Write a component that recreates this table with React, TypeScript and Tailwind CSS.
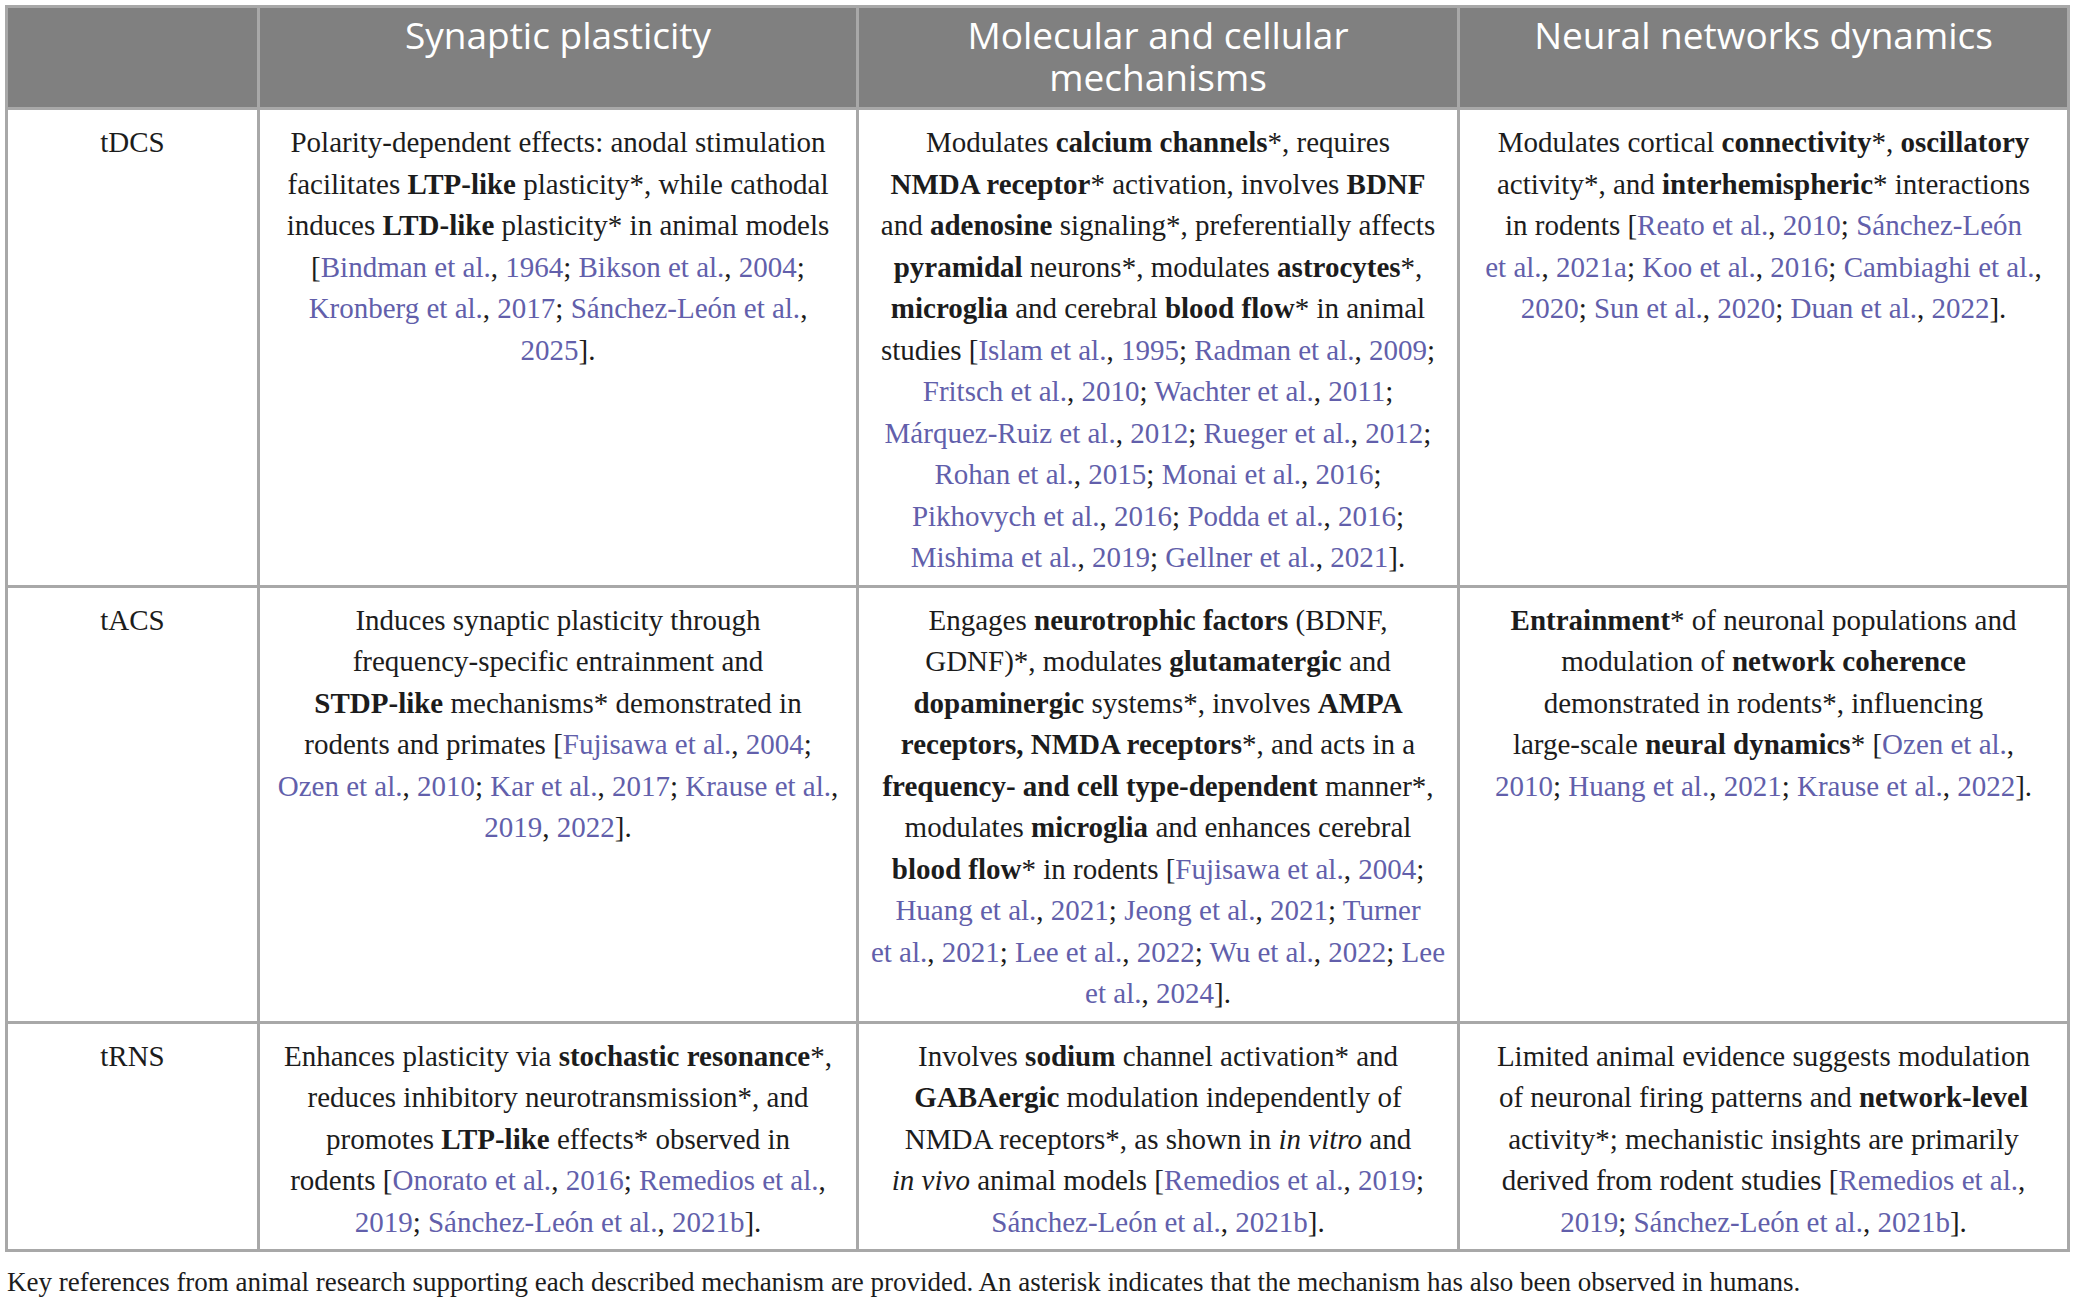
import type { ReactNode } from 'react';

// bold term, citation link, italic
const B = ({ children }: { children: ReactNode }) => (
  <b className="font-bold">{children}</b>
);
const L = ({ children }: { children: ReactNode }) => (
  <span className="text-[#625fab]">{children}</span>
);
const I = ({ children }: { children: ReactNode }) => (
  <i className="italic">{children}</i>
);

// "Author et al., Year" where author and year are separate links
const Cite = ({ who, year }: { who: string; year: string }) => (
  <>
    <L>{who}</L>, <L>{year}</L>
  </>
);

type Row = {
  label: string;
  synaptic: ReactNode;
  molecular: ReactNode;
  network: ReactNode;
};

const rows: Row[] = [
  {
    label: 'tDCS',
    synaptic: (
      <>
        Polarity-dependent effects: anodal stimulation
        <br />
        facilitates <B>LTP-like</B> plasticity*, while cathodal
        <br />
        induces <B>LTD-like</B> plasticity* in animal models
        <br />[<Cite who="Bindman et al." year="1964" />;{' '}
        <Cite who="Bikson et al." year="2004" />;
        <br />
        <Cite who="Kronberg et al." year="2017" />;{' '}
        <L>Sánchez-León et al.</L>,
        <br />
        <L>2025</L>].
      </>
    ),
    molecular: (
      <>
        Modulates <B>calcium channels</B>*, requires
        <br />
        <B>NMDA receptor</B>* activation, involves <B>BDNF</B>
        <br />
        and <B>adenosine</B> signaling*, preferentially affects
        <br />
        <B>pyramidal</B> neurons*, modulates <B>astrocytes</B>*,
        <br />
        <B>microglia</B> and cerebral <B>blood flow</B>* in animal
        <br />
        studies [<Cite who="Islam et al." year="1995" />;{' '}
        <Cite who="Radman et al." year="2009" />;
        <br />
        <Cite who="Fritsch et al." year="2010" />;{' '}
        <Cite who="Wachter et al." year="2011" />;
        <br />
        <Cite who="Márquez-Ruiz et al." year="2012" />;{' '}
        <Cite who="Rueger et al." year="2012" />;
        <br />
        <Cite who="Rohan et al." year="2015" />;{' '}
        <Cite who="Monai et al." year="2016" />;
        <br />
        <Cite who="Pikhovych et al." year="2016" />;{' '}
        <Cite who="Podda et al." year="2016" />;
        <br />
        <Cite who="Mishima et al." year="2019" />;{' '}
        <Cite who="Gellner et al." year="2021" />].
      </>
    ),
    network: (
      <>
        Modulates cortical <B>connectivity</B>*, <B>oscillatory</B>
        <br />
        activity*, and <B>interhemispheric</B>* interactions
        <br />
        in rodents [<Cite who="Reato et al." year="2010" />;{' '}
        <L>Sánchez-León</L>
        <br />
        <L>et al.</L>, <L>2021a</L>; <Cite who="Koo et al." year="2016" />;{' '}
        <L>Cambiaghi et al.</L>,
        <br />
        <L>2020</L>; <Cite who="Sun et al." year="2020" />;{' '}
        <Cite who="Duan et al." year="2022" />].
      </>
    ),
  },
  {
    label: 'tACS',
    synaptic: (
      <>
        Induces synaptic plasticity through
        <br />
        frequency-specific entrainment and
        <br />
        <B>STDP-like</B> mechanisms* demonstrated in
        <br />
        rodents and primates [<Cite who="Fujisawa et al." year="2004" />;
        <br />
        <Cite who="Ozen et al." year="2010" />;{' '}
        <Cite who="Kar et al." year="2017" />; <L>Krause et al.</L>,
        <br />
        <L>2019</L>, <L>2022</L>].
      </>
    ),
    molecular: (
      <>
        Engages <B>neurotrophic factors</B> (BDNF,
        <br />
        GDNF)*, modulates <B>glutamatergic</B> and
        <br />
        <B>dopaminergic</B> systems*, involves <B>AMPA</B>
        <br />
        <B>receptors, NMDA receptors</B>*, and acts in a
        <br />
        <B>frequency- and cell type-dependent</B> manner*,
        <br />
        modulates <B>microglia</B> and enhances cerebral
        <br />
        <B>blood flow</B>* in rodents [
        <Cite who="Fujisawa et al." year="2004" />;
        <br />
        <Cite who="Huang et al." year="2021" />;{' '}
        <Cite who="Jeong et al." year="2021" />; <L>Turner</L>
        <br />
        <L>et al.</L>, <L>2021</L>; <Cite who="Lee et al." year="2022" />;{' '}
        <Cite who="Wu et al." year="2022" />; <L>Lee</L>
        <br />
        <L>et al.</L>, <L>2024</L>].
      </>
    ),
    network: (
      <>
        <B>Entrainment</B>* of neuronal populations and
        <br />
        modulation of <B>network coherence</B>
        <br />
        demonstrated in rodents*, influencing
        <br />
        large-scale <B>neural dynamics</B>* [<L>Ozen et al.</L>,
        <br />
        <L>2010</L>; <Cite who="Huang et al." year="2021" />;{' '}
        <Cite who="Krause et al." year="2022" />].
      </>
    ),
  },
  {
    label: 'tRNS',
    synaptic: (
      <>
        Enhances plasticity via <B>stochastic resonance</B>*,
        <br />
        reduces inhibitory neurotransmission*, and
        <br />
        promotes <B>LTP-like</B> effects* observed in
        <br />
        rodents [<Cite who="Onorato et al." year="2016" />;{' '}
        <L>Remedios et al.</L>,
        <br />
        <L>2019</L>; <Cite who="Sánchez-León et al." year="2021b" />].
      </>
    ),
    molecular: (
      <>
        Involves <B>sodium</B> channel activation* and
        <br />
        <B>GABAergic</B> modulation independently of
        <br />
        NMDA receptors*, as shown in <I>in vitro</I> and
        <br />
        <I>in vivo</I> animal models [
        <Cite who="Remedios et al." year="2019" />;
        <br />
        <Cite who="Sánchez-León et al." year="2021b" />].
      </>
    ),
    network: (
      <>
        Limited animal evidence suggests modulation
        <br />
        of neuronal firing patterns and <B>network-level</B>
        <br />
        activity*; mechanistic insights are primarily
        <br />
        derived from rodent studies [<L>Remedios et al.</L>,
        <br />
        <L>2019</L>; <Cite who="Sánchez-León et al." year="2021b" />].
      </>
    ),
  },
];

const headers = [
  'Synaptic plasticity',
  'Molecular and cellular mechanisms',
  'Neural networks dynamics',
];

export default function App() {
  return (
    <div className="min-h-[1305px] w-[2074px] bg-white pl-[5px] pt-[5px] font-['Liberation_Serif',serif] text-[29px] leading-[41.5px] text-[#1c1c1c]">
      <table className="w-[2062px] table-fixed border-collapse">
        <colgroup>
          <col className="w-[252px]" />
          <col className="w-[599px]" />
          <col className="w-[601px]" />
          <col className="w-[610px]" />
        </colgroup>
        <thead>
          <tr className="bg-[#808080]">
            <th className="border-[3px] border-[#a8a8a8]" />
            {headers.map((h) => (
              <th
                key={h}
                className="border-[3px] border-[#a8a8a8] px-[60px] pb-[9px] pt-[6px] align-top font-['Open_Sans',sans-serif] text-[37px] font-normal leading-[42px] text-white"
              >
                {h}
              </th>
            ))}
          </tr>
        </thead>
        <tbody>
          {rows.map((r) => (
            <tr key={r.label}>
              <td className="border-[3px] border-[#a8a8a8] pt-[12px] text-center align-top">
                {r.label}
              </td>
              {[r.synaptic, r.molecular, r.network].map((cell, i) => (
                <td
                  key={i}
                  className="whitespace-nowrap border-[3px] border-[#a8a8a8] pb-[6px] pt-[12px] text-center align-top"
                >
                  {cell}
                </td>
              ))}
            </tr>
          ))}
        </tbody>
      </table>
      <p className="mt-[10px] pl-[2px] text-[27px]">
        Key references from animal research supporting each described mechanism
        are provided. An asterisk indicates that the mechanism has also been
        observed in humans.
      </p>
    </div>
  );
}
